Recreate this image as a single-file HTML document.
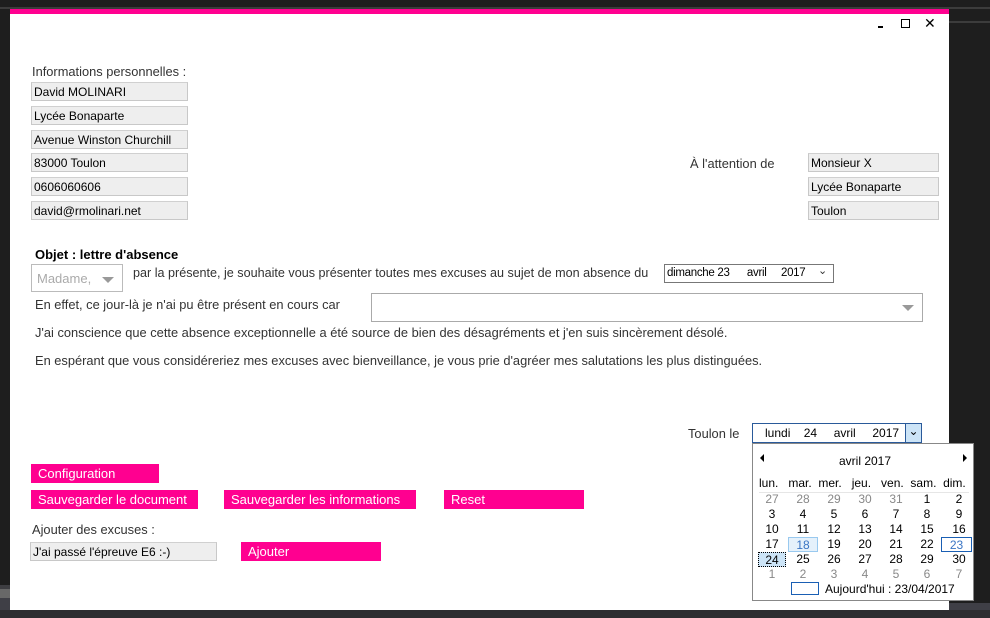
<!DOCTYPE html>
<html><head><meta charset="utf-8"><style>
*{margin:0;padding:0;box-sizing:border-box}
body{width:990px;height:618px;background:#1e1e1e;position:relative;overflow:hidden;font-family:"Liberation Sans",sans-serif;font-size:12.85px;color:#222}
.a{position:absolute;white-space:nowrap}
.f{position:absolute;background:#eeeeee;border:1px solid #c8c8c8;border-top-color:#d0d0d0;height:19px;font-size:12px;color:#000;padding:2px 0 0 2px}
.b{position:absolute;background:#ff0090;color:#fff;height:19px;font-size:13px;padding:2px 0 0 7px}
.t{color:#333}
.cal{position:absolute;left:752px;top:443px;width:222px;height:158px;background:#fff;border:1px solid #888;font-size:12px}
.c{position:absolute;width:24px;text-align:center;color:#000}
.g{color:#888}
</style></head><body>
<div class="a" style="left:0;top:7px;width:990px;height:2px;background:#3c3c3c"></div>
<div class="a" style="left:949px;top:21px;width:41px;height:2px;background:#3c3c3c"></div>
<div class="a" style="left:0;top:585px;width:10px;height:4px;background:#3e3e42"></div>
<div class="a" style="left:0;top:589px;width:10px;height:9px;background:#686868"></div>
<div class="a" style="left:0;top:598px;width:10px;height:12px;background:#3f3f46"></div>
<div class="a" style="left:0;top:610px;width:990px;height:8px;background:#2d2d30"></div>
<div class="a" style="left:949px;top:603px;width:41px;height:7px;background:#3f3f46"></div>

<div class="a" style="left:10px;top:9px;width:939px;height:601px;background:#fff"></div>
<div class="a" style="left:10px;top:9px;width:939px;height:5px;background:#ff0090"></div>
<div class="a" style="left:878px;top:26px;width:5px;height:2px;background:#000"></div>
<div class="a" style="left:901px;top:19px;width:9px;height:9px;border:1.5px solid #000"></div>
<div class="a" style="left:924px;top:15px;font-size:14px;color:#000">✕</div>

<div class="a t" style="left:32px;top:64px">Informations personnelles :</div>
<div class="f" style="left:31px;top:82px;width:157px">David MOLINARI</div>
<div class="f" style="left:31px;top:106px;width:157px">Lycée Bonaparte</div>
<div class="f" style="left:31px;top:130px;width:157px">Avenue Winston Churchill</div>
<div class="f" style="left:31px;top:153px;width:157px">83000 Toulon</div>
<div class="f" style="left:31px;top:177px;width:157px">0606060606</div>
<div class="f" style="left:31px;top:201px;width:157px">david@rmolinari.net</div>

<div class="a t" style="left:690px;top:156px">À l'attention de</div>
<div class="f" style="left:808px;top:153px;width:131px">Monsieur X</div>
<div class="f" style="left:808px;top:177px;width:131px">Lycée Bonaparte</div>
<div class="f" style="left:808px;top:201px;width:131px">Toulon</div>

<div class="a" style="left:35px;top:247px;font-weight:bold;font-size:13px;color:#000">Objet : lettre d'absence</div>
<div class="a" style="left:31px;top:264px;width:92px;height:28px;border:1px solid #bbb;color:#aaa;font-size:13px;padding:6px 0 0 5px">Madame,</div>
<div class="a" style="left:102px;top:277px;width:0;height:0;border-left:6px solid transparent;border-right:6px solid transparent;border-top:6px solid #999"></div>
<div class="a t" style="left:133px;top:266px;font-size:12.6px">par la présente, je souhaite vous présenter toutes mes excuses au sujet de mon absence du</div>
<div class="a" style="left:664px;top:264px;width:170px;height:19px;border:1px solid #777;font-size:11.5px;color:#000;padding:2px 0 0 2px;letter-spacing:-0.3px;background:#fff">dimanche 23&nbsp;&nbsp;&nbsp;&nbsp;&nbsp;&nbsp;avril&nbsp;&nbsp;&nbsp;&nbsp;&nbsp;2017</div>
<div class="a" style="left:818px;top:264px;font-size:11px;color:#333">⌄</div>
<div class="a t" style="left:35px;top:297px">En effet, ce jour-là je n'ai pu être présent en cours car</div>
<div class="a" style="left:371px;top:293px;width:552px;height:29px;border:1px solid #aaa"></div>
<div class="a" style="left:902px;top:305px;width:0;height:0;border-left:6px solid transparent;border-right:6px solid transparent;border-top:6px solid #999"></div>
<div class="a t" style="left:35px;top:325px">J'ai conscience que cette absence exceptionnelle a été source de bien des désagréments et j'en suis sincèrement désolé.</div>
<div class="a t" style="left:35px;top:353px">En espérant que vous considéreriez mes excuses avec bienveillance, je vous prie d'agréer mes salutations les plus distinguées.</div>

<div class="a t" style="left:688px;top:426px">Toulon le</div>
<div class="a" style="left:752px;top:423px;width:170px;height:20px;border:1px solid #2a5a9a;font-size:12px;color:#000;padding:2px 0 0 12px">lundi&nbsp;&nbsp;&nbsp;&nbsp;24&nbsp;&nbsp;&nbsp;&nbsp;&nbsp;avril&nbsp;&nbsp;&nbsp;&nbsp;&nbsp;2017</div>
<div class="a" style="left:905px;top:424px;width:16px;height:18px;background:#cce4f7;border-left:1px solid #2a5a9a;font-size:12px;text-align:center;color:#000;line-height:14px">⌄</div>

<div class="cal">
<div class="a" style="left:7px;top:10px;width:0;height:0;border-top:4px solid transparent;border-bottom:4px solid transparent;border-right:4px solid #000"></div>
<div class="a" style="left:210px;top:10px;width:0;height:0;border-top:4px solid transparent;border-bottom:4px solid transparent;border-left:4px solid #000"></div>
<div class="a" style="left:86px;top:10px;color:#000">avril 2017</div>
<div class="a" style="left:6px;top:32px;width:212px;color:#000;font-size:12px">lun.&nbsp;&nbsp;&nbsp;mar.&nbsp;&nbsp;mer.&nbsp;&nbsp;&nbsp;jeu.&nbsp;&nbsp;&nbsp;ven.&nbsp;&nbsp;sam.&nbsp;&nbsp;dim.</div>
<div class="a" style="left:6px;top:48px;width:210px;height:1px;background:#e6e6e6"></div>
<div id="g"></div>
<div class="a" style="left:38px;top:138px;width:28px;height:13px;border:1px solid #1a5fb4"></div>
<div class="a" style="left:72px;top:138px;color:#000">Aujourd'hui : 23/04/2017</div>
</div>

<div class="b" style="left:31px;top:464px;width:128px">Configuration</div>
<div class="b" style="left:31px;top:490px;width:167px">Sauvegarder le document</div>
<div class="b" style="left:224px;top:490px;width:192px">Sauvegarder les informations</div>
<div class="b" style="left:444px;top:490px;width:140px">Reset</div>
<div class="a t" style="left:32px;top:522px">Ajouter des excuses :</div>
<div class="f" style="left:30px;top:542px;width:187px">J'ai passé l'épreuve E6 :-)</div>
<div class="b" style="left:241px;top:542px;width:140px">Ajouter</div>

<script>
var rows=[[27,28,29,30,31,1,2],[3,4,5,6,7,8,9],[10,11,12,13,14,15,16],[17,18,19,20,21,22,23],[24,25,26,27,28,29,30],[1,2,3,4,5,6,7]];
var xs=[7,38,69,100,131,162,194],h='';
rows.forEach(function(r,i){r.forEach(function(d,j){
 var gray=(i==0&&j<5)||i==5;var st='left:'+xs[j]+'px;top:'+(48+i*15)+'px;';
 if(i==3&&j==1)st+='background:#e5f1fb;border:1px solid #99c9ef;color:#3a75c4;height:15px;width:30px;margin-left:-3px;';
 if(i==3&&j==6)st+='border:1px solid #1a5fb4;color:#3a75c4;height:15px;width:31px;margin-left:-6px;';
 if(i==4&&j==0)st+='background:#cce4f7;border:1px dotted #000;height:15px;width:28px;margin-left:-2px;';
 h+='<div class="c'+(gray?' g':'')+'" style="'+st+'">'+d+'</div>';});});
document.getElementById('g').innerHTML=h;
</script>
</body></html>
